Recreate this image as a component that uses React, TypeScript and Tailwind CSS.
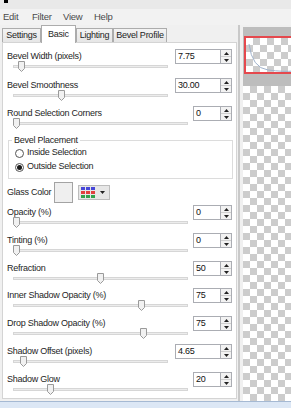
import type { ReactNode } from "react";

type SliderRow = {
	label: string;
	value: string;
	wide?: boolean;
	thumb: number;
	height: string;
};

const topRows: SliderRow[] = [
	{ label: "Bevel Width (pixels)", value: "7.75", wide: true, thumb: 5, height: "h-[29px]" },
	{ label: "Bevel Smoothness", value: "30.00", wide: true, thumb: 45, height: "h-[28px]" },
	{ label: "Round Selection Corners", value: "0", thumb: 0, height: "h-[28px]" },
];

const bottomRows: SliderRow[] = [
	{ label: "Opacity (%)", value: "0", thumb: 0, height: "h-[28px]" },
	{ label: "Tinting (%)", value: "0", thumb: 0, height: "h-[28px]" },
	{ label: "Refraction", value: "50", thumb: 84, height: "h-[27px]" },
	{ label: "Inner Shadow Opacity (%)", value: "75", thumb: 125, height: "h-[28px]" },
	{ label: "Drop Shadow Opacity (%)", value: "75", thumb: 127, height: "h-[28px]" },
	{ label: "Shadow Offset (pixels)", value: "4.65", wide: true, thumb: 7, height: "h-[28px]" },
	{ label: "Shadow Glow", value: "20", thumb: 34, height: "h-[28px]" },
];

const checker =
	"bg-[conic-gradient(#cccccc_25%,#ffffff_0_50%,#cccccc_0_75%,#ffffff_0)] bg-[length:14px_14px]";

export default function App() {
	return (
		<div className="flex h-[408px] w-[291px] flex-col overflow-hidden bg-[#f0f0f0] font-['Liberation_Sans',Arial,sans-serif] text-[9px] tracking-[-0.25px] text-[#1e1e1e]">
			{/* window title remnant */}
			<div className="h-[9px] shrink-0 bg-[#e9e9e9]">
				<div className="ml-[4px] h-[3px] w-[4px] bg-black" />
			</div>

			{/* menu */}
			<div className="flex h-[16px] shrink-0 items-center bg-[#f2f2f2] pl-[3px] text-[9.5px] text-[#4a4a4a]">
				<span className="w-[29px]">Edit</span>
				<span className="w-[31px]">Filter</span>
				<span className="w-[31px]">View</span>
				<span>Help</span>
			</div>

			<div className="flex h-[376px] shrink-0">
				{/* tab control */}
				<div className="flex w-[238px] shrink-0 flex-col">
					<div className="relative z-10 flex h-[17px] items-end pl-[2px]">
						<Tab width="w-[39px]">Settings</Tab>
						<Tab width="w-[35px]" selected>
							Basic
						</Tab>
						<Tab width="w-[37px]">Lighting</Tab>
						<Tab width="w-[54px]">Bevel Profile</Tab>
					</div>
					<div className="ml-[2px] flex h-[357px] w-[235px] flex-col border border-[#d4d4d4] bg-white pt-[6px] pl-[4px] pr-[4px]">
						{topRows.map((r) => (
							<Row key={r.label} row={r} />
						))}

						<fieldset className="mt-[1px] ml-[1px] -mr-[1px] border border-[#dcdcdc] pb-[5px]">
							<legend className="ml-[3px] px-[2px] leading-[10px]">Bevel Placement</legend>
							<Radio label="Inside Selection" className="mt-[2px]" />
							<Radio label="Outside Selection" className="mt-[2px]" checked />
						</fieldset>

						<div className="mt-[3px] flex h-[21px] items-center">
							<span className="w-[47px]">Glass Color</span>
							<div className="h-[21px] w-[19px] border border-[#a3a3a3] bg-[#efefef]" />
							<div className="ml-[5px] flex h-[15px] w-[32px] items-center border border-[#bdbdbd] bg-[#e7e7e7] pl-[2px]">
								<PaletteIcon />
								<svg width="5" height="3" viewBox="0 0 5 3" className="ml-[5px]">
									<path d="M0 0H5L2.5 3Z" fill="#222" />
								</svg>
							</div>
						</div>

						<div className="mt-[2px] flex flex-col">
							{bottomRows.map((r) => (
								<Row key={r.label} row={r} />
							))}
						</div>
					</div>
				</div>

				{/* preview */}
				<div className="flex flex-1 border-l-2 border-[#c9c9c9] pl-[3px]">
					<div className="flex flex-1 flex-col pt-[2px]">
						<div className="h-[59px] shrink-0 bg-[#bdbdbd] pt-[9px] pl-[1px]">
							<div className={`relative h-[38px] border-2 border-r-0 border-[#e5484d] ${checker}`}>
								<svg width="48" height="34" viewBox="0 0 48 34" className="absolute left-0 top-0">
									<path d="M3 6Q6 30 22 32T48 33" fill="none" stroke="#9fb2cc" strokeWidth="1" />
								</svg>
							</div>
						</div>
						<div className={`flex-1 ${checker}`} />
					</div>
				</div>
			</div>

			<div className="flex-1 border-t border-[#a5b9d3] bg-[#dce7f5]" />
		</div>
	);
}

function Tab({
	children,
	width,
	selected,
}: {
	children: ReactNode;
	width: string;
	selected?: boolean;
}) {
	if (selected) {
		return (
			<div
				className={`${width} -mb-[1px] flex h-[18px] shrink-0 items-start justify-center border border-b-0 border-[#acacac] bg-white pt-[2px]`}
			>
				{children}
			</div>
		);
	}
	return (
		<div
			className={`${width} flex h-[14px] shrink-0 items-center justify-center border border-b-0 border-[#acacac] bg-[linear-gradient(#f3f3f3,#e6e6e6)]`}
		>
			{children}
		</div>
	);
}

function Row({ row }: { row: SliderRow }) {
	return (
		<div className={`${row.height} flex shrink-0 flex-col`}>
			<div className="flex h-[15px] items-center justify-between">
				<span>{row.label}</span>
				<Spin value={row.value} wide={row.wide} />
			</div>
			<div
				className={`relative -mt-[3px] ml-[6px] h-[11px] ${row.wide ? "w-[155px]" : "w-[175px]"}`}
			>
				<div className="absolute left-0 right-0 top-[4px] h-[3px] border border-[#d6d6d6] bg-[#ececec]" />
				<svg
					width="7"
					height="11"
					viewBox="0 0 7 11"
					className="absolute top-0"
					style={{ left: row.thumb }}
				>
					<path d="M0.5 0.5H6.5V7.5L3.5 10.5L0.5 7.5Z" fill="#f1f1f1" stroke="#9a9a9a" />
				</svg>
			</div>
		</div>
	);
}

function Spin({ value, wide }: { value: string; wide?: boolean }) {
	return (
		<div className={`flex h-[15px] shrink-0 ${wide ? "w-[57px]" : "w-[39px]"}`}>
			<div className="flex-1 border border-[#abadb3] bg-white pl-[2px] leading-[13px] text-[#111]">
				{value}
			</div>
			<div className="flex w-[11px] flex-col border border-l-0 border-[#abadb3] bg-[#f2f2f2]">
				<div className="flex flex-1 items-center justify-center border-b border-[#cfcfcf]">
					<svg width="5" height="3" viewBox="0 0 5 3">
						<path d="M2.5 0L5 3H0Z" fill="#222" />
					</svg>
				</div>
				<div className="flex flex-1 items-center justify-center">
					<svg width="5" height="3" viewBox="0 0 5 3">
						<path d="M0 0H5L2.5 3Z" fill="#222" />
					</svg>
				</div>
			</div>
		</div>
	);
}

function Radio({
	label,
	checked,
	className,
}: {
	label: string;
	checked?: boolean;
	className: string;
}) {
	return (
		<div className={`flex h-[12px] items-center pl-[6px] ${className}`}>
			<div className="flex h-[9px] w-[9px] items-center justify-center rounded-full border border-[#555] bg-white">
				{checked && <div className="h-[5px] w-[5px] rounded-full bg-[#1a1a1a]" />}
			</div>
			<span className="ml-[3px]">{label}</span>
		</div>
	);
}

function PaletteIcon() {
	const rows = ["#4747d8", "#e2403e", "#33a24c"];
	return (
		<div className="flex flex-col gap-[1px]">
			{rows.map((c) => (
				<div key={c} className="flex gap-[1px]">
					<div className="h-[3px] w-[4px]" style={{ background: c }} />
					<div className="h-[3px] w-[4px]" style={{ background: c }} />
					<div className="h-[3px] w-[4px]" style={{ background: c }} />
				</div>
			))}
		</div>
	);
}
